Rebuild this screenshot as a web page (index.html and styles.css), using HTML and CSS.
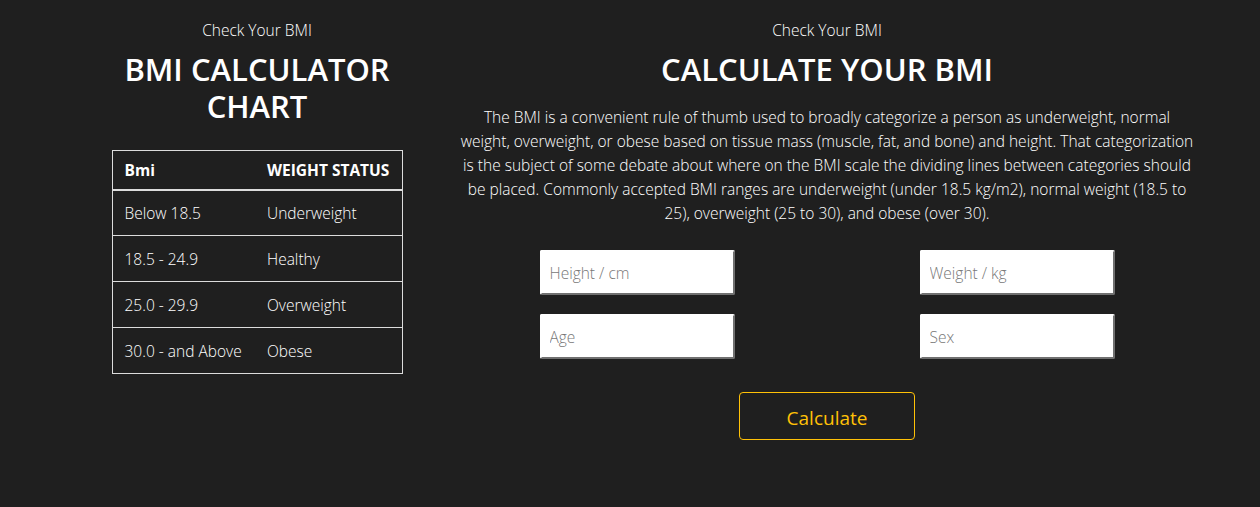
FILE: index.html
```html
<!DOCTYPE html>
<html lang="en">
<head>
<meta charset="utf-8">
<title>BMI Calculator</title>
<link rel="stylesheet" href="styles.css">
</head>
<body>
<main class="page">
  <section class="chart-col">
    <p class="eyebrow">Check Your BMI</p>
    <h1 class="title title-chart">BMI CALCULATOR CHART</h1>
    <table class="bmi-table">
      <thead>
        <tr><th>Bmi</th><th>WEIGHT STATUS</th></tr>
      </thead>
      <tbody>
        <tr><td>Below 18.5</td><td>Underweight</td></tr>
        <tr><td>18.5 - 24.9</td><td>Healthy</td></tr>
        <tr><td>25.0 - 29.9</td><td>Overweight</td></tr>
        <tr><td>30.0 - and Above</td><td>Obese</td></tr>
      </tbody>
    </table>
  </section>
  <section class="calc-col">
    <p class="eyebrow">Check Your BMI</p>
    <h1 class="title">CALCULATE YOUR BMI</h1>
    <p class="lead">The BMI is a convenient rule of thumb used to broadly categorize a person as underweight, normal<br>weight, overweight, or obese based on tissue mass (muscle, fat, and bone) and height. That categorization<br>is the subject of some debate about where on the BMI scale the dividing lines between categories should<br>be placed. Commonly accepted BMI ranges are underweight (under 18.5 kg/m2), normal weight (18.5 to<br>25), overweight (25 to 30), and obese (over 30).</p>
    <form class="bmi-form">
      <input class="field" type="text" placeholder="Height / cm">
      <input class="field" type="text" placeholder="Weight / kg">
      <input class="field" type="text" placeholder="Age">
      <input class="field" type="text" placeholder="Sex">
    </form>
    <button class="calc-btn" type="button">Calculate</button>
  </section>
</main>
</body>
</html>
```

FILE: styles.css
```css
* { box-sizing: border-box; }
html, body {
  margin: 0;
  padding: 0;
  background: #1f1f1f;
  color: #ffffff;
  font-family: "Open Sans", "Noto Sans", sans-serif;
  font-weight: 300;
}
.page {
  width: 1140px;
  margin-left: 50px;
  display: grid;
  grid-template-columns: 414px 726px;
  padding-top: 19px;
}
.chart-col, .calc-col {
  display: flex;
  flex-direction: column;
  align-items: center;
}
.eyebrow {
  margin: 0;
  font-size: 15.5px;
  line-height: 22px;
}
.title {
  margin: 10px 0 0;
  font-size: 31px;
  line-height: 37px;
  font-weight: 600;
  text-align: center;
}
.title-chart { width: 291px; }
.bmi-table {
  margin-top: 25px;
  width: 291px;
  border-collapse: collapse;
  border: 1px solid #dcdcdc;
  font-size: 15.5px;
}
.bmi-table th, .bmi-table td {
  text-align: left;
  padding: 0 0 0 12px;
  border-bottom: 1px solid #dcdcdc;
}
.bmi-table th {
  height: 39px;
  font-weight: 700;
  border-bottom: 2px solid #dcdcdc;
}
.bmi-table td { height: 46px; }
.bmi-table td:first-child, .bmi-table th:first-child { width: 143px; }
.lead {
  margin: 17px 0 0;
  font-size: 15.5px;
  line-height: 24px;
  text-align: center;
  width: 760px;
}
.bmi-form {
  margin-top: 25px;
  width: 575px;
  display: grid;
  grid-template-columns: 195px 195px;
  justify-content: space-between;
  row-gap: 19px;
}
.field {
  height: 45px;
  border: 2px solid;
  border-color: #ffffff #707070 #707070 #ffffff;
  border-radius: 2px;
  background: #ffffff;
  padding: 0 8px;
  font-family: inherit;
  font-weight: 300;
  font-size: 15.5px;
  color: #333;
}
.field::placeholder { color: #777; }
.calc-btn {
  margin-top: 33px;
  width: 176px;
  height: 48px;
  padding-top: 4px;
  background: transparent;
  border: 1px solid #ffc107;
  border-radius: 4px;
  color: #ffc107;
  font-family: inherit;
  font-weight: 400;
  font-size: 19px;
}
```
